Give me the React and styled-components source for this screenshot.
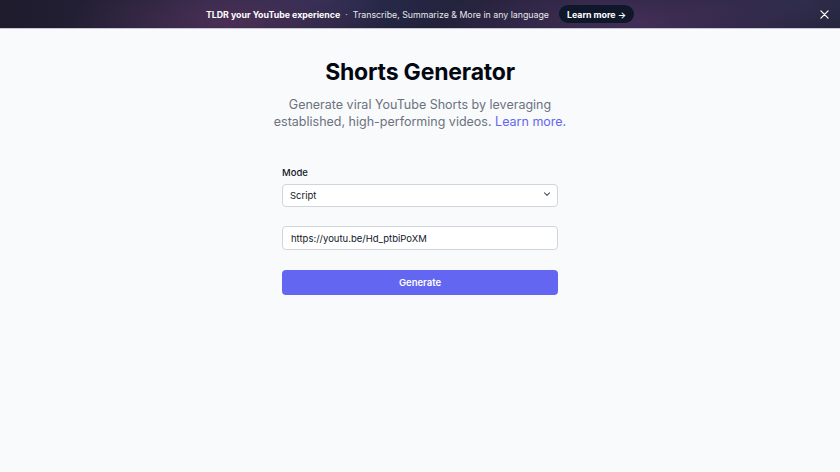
import React, { useState } from "react";
import styled, { createGlobalStyle } from "styled-components";

const GlobalStyle = createGlobalStyle`
  html, body {
    margin: 0;
    padding: 0;
    background: #f9fafb;
    font-family: Inter, "Noto Sans", sans-serif;
  }
  * { box-sizing: border-box; }
`;

const App = () => {
  const [mode, setMode] = useState("Script");
  const [url, setUrl] = useState("https://youtu.be/Hd_ptbiPoXM");

  return (
    <Page>
      <GlobalStyle />
      <Banner>
        <BannerText>
          <strong>TLDR your YouTube experience</strong>
          <Dot>·</Dot>
          <span>Transcribe, Summarize &amp; More in any language</span>
        </BannerText>
        <BannerButton href="#">Learn more →</BannerButton>
        <Close aria-label="Close">
          <svg width="9" height="9" viewBox="0 0 10 10">
            <path d="M1 1L9 9M9 1L1 9" stroke="#fff" strokeWidth="1.4" strokeLinecap="round" />
          </svg>
        </Close>
      </Banner>

      <Main>
        <Title>Shorts Generator</Title>
        <Subtitle>
          Generate viral YouTube Shorts by leveraging
          <br />
          established, high-performing videos. <a href="#">Learn more.</a>
        </Subtitle>

        <Form onSubmit={(e) => e.preventDefault()}>
          <Field>
            <Label>Mode</Label>
            <SelectWrap>
              <Select value={mode} onChange={(e) => setMode(e.target.value)}>
                <option>Script</option>
                <option>Clips</option>
              </Select>
              <Chevron width="10" height="10" viewBox="0 0 10 10">
                <path d="M2.5 3.8L5 6.3L7.5 3.8" fill="none" stroke="#4b5563" strokeWidth="1.1" strokeLinecap="round" strokeLinejoin="round" />
              </Chevron>
            </SelectWrap>
          </Field>
          <Input value={url} onChange={(e) => setUrl(e.target.value)} />
          <Button type="submit">Generate</Button>
        </Form>
      </Main>
    </Page>
  );
};

export default App;

const Page = styled.div`
  min-height: 100vh;
  background: #f9fafb;
`;

const Banner = styled.div`
  position: relative;
  height: 29px;
  display: flex;
  align-items: center;
  justify-content: center;
  gap: 10px;
  color: #fff;
  font-size: 8.8px;
  background:
    radial-gradient(ellipse 160px 50px at 230px 22px, rgba(85, 50, 90, 0.75), transparent),
    radial-gradient(ellipse 200px 50px at 640px 22px, rgba(75, 50, 95, 0.75), transparent),
    radial-gradient(ellipse 160px 40px at 320px 0px, rgba(55, 55, 105, 0.6), transparent),
    radial-gradient(ellipse 140px 40px at 800px 0px, rgba(55, 55, 95, 0.5), transparent),
    linear-gradient(90deg, #1d1b2c 0%, #2a2540 25%, #1e2036 45%, #2a2440 70%, #222237 100%);
  border-bottom: 1px solid #c9c6d6;
`;

const BannerText = styled.div`
  display: flex;
  align-items: center;
  gap: 5px;

  strong {
    font-weight: 700;
  }
  span {
    color: #e5e7eb;
  }
`;

const Dot = styled.i`
  font-style: normal;
  color: #d1d5db;
`;

const BannerButton = styled.a`
  display: inline-flex;
  align-items: center;
  height: 18px;
  padding: 0 8px;
  border-radius: 9px;
  background: #0f172a;
  color: #fff;
  font-weight: 700;
  text-decoration: none;
  font-size: 8.8px;
`;

const Close = styled.button`
  position: absolute;
  right: 11px;
  top: 10px;
  background: none;
  border: 0;
  padding: 0;
  width: 9px;
  height: 9px;
  display: flex;
  cursor: pointer;
`;

const Main = styled.main`
  display: flex;
  flex-direction: column;
  align-items: center;
  padding-top: 28px;
`;

const Title = styled.h1`
  margin: 0;
  font-size: 23px;
  line-height: 30px;
  font-weight: 700;
  color: #030712;
  letter-spacing: -0.2px;
`;

const Subtitle = styled.p`
  margin: 9px 0 0;
  text-align: center;
  font-size: 12.5px;
  line-height: 17px;
  color: #6b7280;

  a {
    color: #6366f1;
    text-decoration: none;
  }
`;

const Form = styled.form`
  width: 276px;
  margin-top: 36px;
  display: flex;
  flex-direction: column;
  gap: 19px;
`;

const Field = styled.div`
  display: flex;
  flex-direction: column;
  gap: 3px;
`;

const Label = styled.label`
  font-size: 9.5px;
  font-weight: 500;
  color: #111827;
  line-height: 14px;
`;

const SelectWrap = styled.div`
  position: relative;
`;

const Select = styled.select`
  appearance: none;
  width: 100%;
  height: 23px;
  padding: 0 7px;
  font-family: Inter, sans-serif;
  font-size: 9.5px;
  color: #111827;
  background: #fff;
  border: 1px solid #d1d5db;
  border-radius: 4px;
  outline: none;
`;

const Chevron = styled.svg`
  position: absolute;
  right: 6px;
  top: 6px;
  pointer-events: none;
`;

const Input = styled.input`
  width: 100%;
  height: 24px;
  padding: 0 8px;
  font-family: Inter, sans-serif;
  font-size: 9.5px;
  color: #111827;
  background: #fff;
  border: 1px solid #d1d5db;
  border-radius: 4px;
  outline: none;
`;

const Button = styled.button`
  width: 100%;
  height: 25px;
  margin-top: 1px;
  border: 0;
  border-radius: 4px;
  background: #6366f1;
  color: #fff;
  font-family: Inter, sans-serif;
  font-size: 9.5px;
  font-weight: 600;
  cursor: pointer;
`;
